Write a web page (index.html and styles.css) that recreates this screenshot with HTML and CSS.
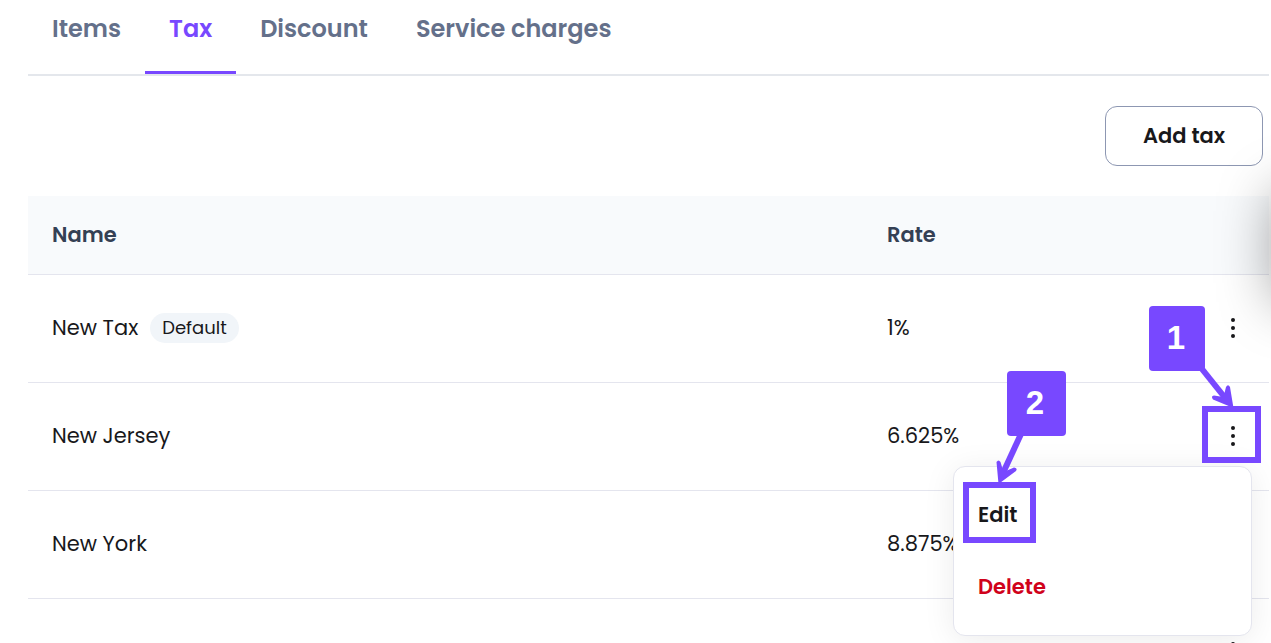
FILE: index.html
```html
<!DOCTYPE html>
<html lang="en">
<head>
  <meta charset="UTF-8">
  <title>Tax settings</title>
  <meta name="viewport" content="width=device-width, initial-scale=1">
  <link rel="stylesheet" href="styles.css">
</head>
<body>
  <div class="page">
    <nav class="tabs">
      <a href="#items" class="tab">Items</a>
      <a href="#tax" class="tab active" aria-current="page">Tax</a>
      <a href="#discount" class="tab">Discount</a>
      <a href="#service" class="tab">Service charges</a>
    </nav>

    <main>
      <div class="toolbar">
        <button type="button" class="btn">Add tax</button>
      </div>

      <table class="tax-table">
        <colgroup>
          <col>
          <col class="col-rate">
          <col class="col-actions">
        </colgroup>
        <thead>
          <tr>
            <th scope="col">Name</th>
            <th scope="col">Rate</th>
            <td></td>
          </tr>
        </thead>
        <tbody>
          <tr>
            <td><div class="name">New Tax <span class="tag">Default</span></div></td>
            <td>1%</td>
            <td>
              <div class="actions">
                <button type="button" class="more" aria-label="More actions"><svg viewBox="0 0 24 24"><circle cx="12" cy="4" r="2"/><circle cx="12" cy="12" r="2"/><circle cx="12" cy="20" r="2"/></svg></button>
              </div>
            </td>
          </tr>
          <tr>
            <td>New Jersey</td>
            <td>6.625%</td>
            <td>
              <div class="actions">
                <button type="button" class="more" aria-label="More actions"><svg viewBox="0 0 24 24"><circle cx="12" cy="4" r="2"/><circle cx="12" cy="12" r="2"/><circle cx="12" cy="20" r="2"/></svg></button>
                <div class="menu">
                  <button type="button" class="menu-item">Edit</button>
                  <button type="button" class="menu-item danger">Delete</button>
                </div>
              </div>
            </td>
          </tr>
          <tr>
            <td>New York</td>
            <td>8.875%</td>
            <td></td>
          </tr>
          <tr>
            <td></td>
            <td></td>
            <td>
              <div class="actions">
                <button type="button" class="more" aria-label="More actions"><svg viewBox="0 0 24 24"><circle cx="12" cy="4" r="2"/><circle cx="12" cy="12" r="2"/><circle cx="12" cy="20" r="2"/></svg></button>
              </div>
            </td>
          </tr>
        </tbody>
      </table>
    </main>

    <aside class="drawer"></aside>

    <!-- step markers -->
    <svg class="steps" viewBox="0 0 320 260">
      <rect class="frame" x="254" y="109" width="53" height="51"/>
      <rect class="frame" x="15" y="185" width="67" height="55"/>

      <path class="shaft" d="M251 69 L275 99"/>
      <path class="head" d="M282.500 108 L262 99.500 Q259.500 96 263 95.500 L272.500 97 L275 87 Q277 83.500 279 87 Z"/>
      <rect class="badge" x="198" y="6" width="56" height="65" rx="4"/>
      <text x="225" y="49">1</text>

      <path class="shaft" d="M70 134 L52 173"/>
      <path class="head" d="M47.500 184 L45.500 162 Q47.500 159 49.500 162 L52.500 172 L63 167.500 Q67 168 65 171 Z"/>
      <rect class="badge" x="56" y="71" width="59" height="65" rx="4"/>
      <text x="84" y="114">2</text>
    </svg>
  </div>
</body>
</html>
```

FILE: styles.css
```css
* {
  box-sizing: border-box;
}
body {
  margin: 0;
  font-family: Poppins, Inter, sans-serif;
  font-size: 21px;
  line-height: 30px;
  color: #18181b;
  background: #fff;
}
button {
  font: inherit;
  color: inherit;
  cursor: pointer;
}
.page {
  position: relative;
  height: 100vh;
  overflow: hidden;
  padding: 0 2px 0 28px;
}

/* tabs */
.tabs {
  display: flex;
  border-bottom: 2px solid #e4e7ec;
}
.tab {
  padding: 14px 24px 27px;
  border-bottom: 3px solid transparent;
  font-size: 24px;
  font-weight: 600;
  color: #64708a;
  text-decoration: none;
}
.tab.active {
  color: #7848ff;
  border-bottom-color: #7848ff;
}

.toolbar {
  display: flex;
  justify-content: flex-end;
  padding: 30px 6px;
}
.btn {
  width: 158px;
  height: 60px;
  border: 1px solid #8d97b2;
  border-radius: 12px;
  background: #fff;
  font-weight: 600;
}

/* table */
.tax-table {
  width: 100%;
  table-layout: fixed;
  border-collapse: separate;
  border-spacing: 0;
}
.col-rate {
  width: 300px;
}
.col-actions {
  width: 106px;
}
.tax-table th,
.tax-table td {
  height: 108px;
  padding: 0 24px 2px;
  border-bottom: 1px solid #e4e5ee;
  text-align: left;
}
.tax-table thead th,
.tax-table thead td {
  height: 79px;
  padding-bottom: 0;
  background: #f8fafc;
  color: #344054;
  font-weight: 600;
}
.name {
  display: flex;
  align-items: center;
  gap: 12px;
}
.tag {
  padding: 0 12px;
  border-radius: 15px;
  background: #f1f5f9;
  font-size: 18px;
}
.actions {
  position: relative;
  display: flex;
  justify-content: flex-end;
}
.more {
  display: flex;
  width: 24px;
  height: 24px;
  padding: 0;
  border: 0;
  background: none;
}
.more svg {
  width: 24px;
  height: 24px;
  fill: #18181b;
}
.menu {
  position: absolute;
  top: 42px;
  right: -7px;
  width: 299px;
  padding: 12px 0;
  border: 1px solid #e4e5ee;
  border-radius: 12px;
  background: #fff;
  box-shadow: 0 4px 32px rgba(0, 0, 0, 0.08);
}
.menu-item {
  display: block;
  width: 100%;
  height: 72px;
  padding: 0 24px;
  border: 0;
  background: none;
  font-weight: 600;
  text-align: left;
}
.danger {
  color: #d0021b;
}

.drawer {
  position: absolute;
  top: 192px;
  left: 100%;
  width: 300px;
  height: 110px;
  box-shadow: 4px 0 56px rgba(0, 0, 0, 0.4);
}

/* step markers */
.steps {
  position: absolute;
  top: 300px;
  right: 0;
  width: 320px;
  height: 260px;
  pointer-events: none;
}
.frame {
  fill: none;
  stroke: #7848ff;
  stroke-width: 6;
}
.badge,
.head {
  fill: #7848ff;
}
.shaft {
  stroke: #7848ff;
  stroke-width: 6;
}
.steps text {
  fill: #fff;
  font-family: "Liberation Sans", Arial, sans-serif;
  font-size: 33px;
  font-weight: 700;
  text-anchor: middle;
}
```
